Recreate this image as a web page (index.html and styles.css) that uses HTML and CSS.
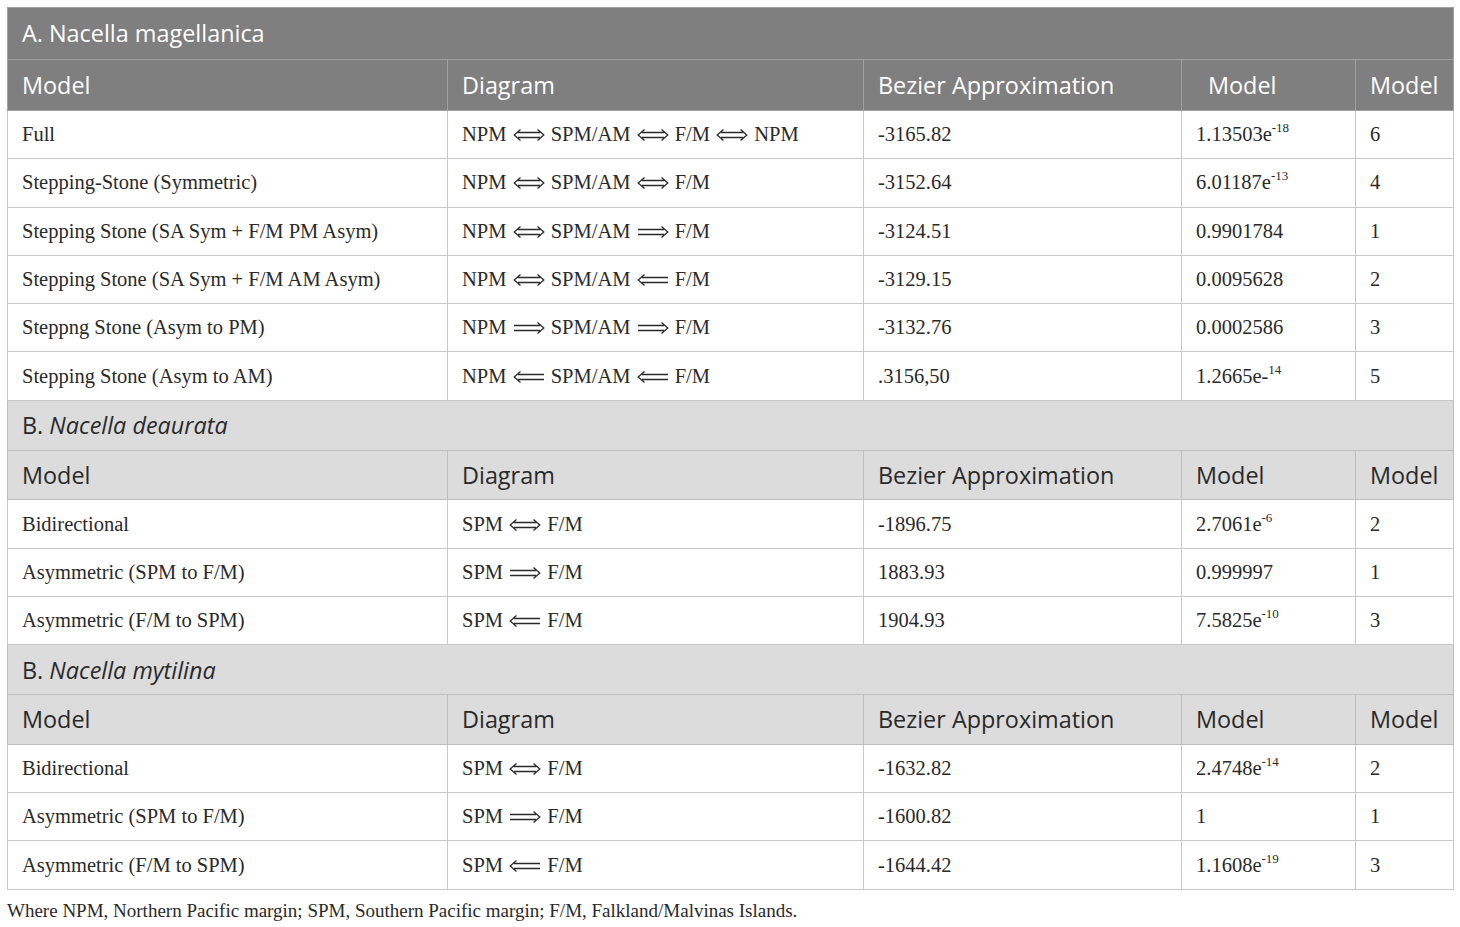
FILE: index.html
```html
<!DOCTYPE html>
<html>
<head>
<meta charset="utf-8">
<link rel="stylesheet" href="styles.css">
</head>
<body>
<svg width="0" height="0" class="defs" aria-hidden="true">
<defs>
<g id="lr"><path d="M5 3.5H27M5 8.5H27M7.5 0.5L1.2 6L7.5 11.5M24.5 0.5L30.8 6L24.5 11.5" fill="none" stroke="#2a2a2a" stroke-width="1.3"/></g>
<g id="r"><path d="M1 3.5H27M1 8.5H27M24.5 0.5L30.8 6L24.5 11.5" fill="none" stroke="#2a2a2a" stroke-width="1.3"/></g>
<g id="l"><path d="M5 3.5H31M5 8.5H31M7.5 0.5L1.2 6L7.5 11.5" fill="none" stroke="#2a2a2a" stroke-width="1.3"/></g>
</defs>
</svg>
<div class="wrap">
<table class="tbl">
<colgroup>
<col class="c1"><col class="c2"><col class="c3"><col class="c4"><col class="c5">
</colgroup>
<tbody>
<tr class="title dark"><td colspan="5">A. Nacella magellanica</td></tr>
<tr class="head dark"><td>Model</td><td>Diagram</td><td>Bezier Approximation</td><td class="ind">Model</td><td>Model</td></tr>
<tr><td>Full</td><td>NPM <svg class="ar" viewBox="0 0 32 12"><use href="#lr"/></svg> SPM/AM <svg class="ar" viewBox="0 0 32 12"><use href="#lr"/></svg> F/M <svg class="ar" viewBox="0 0 32 12"><use href="#lr"/></svg> NPM</td><td>-3165.82</td><td>1.13503e<sup>-18</sup></td><td>6</td></tr>
<tr><td>Stepping-Stone (Symmetric)</td><td>NPM <svg class="ar" viewBox="0 0 32 12"><use href="#lr"/></svg> SPM/AM <svg class="ar" viewBox="0 0 32 12"><use href="#lr"/></svg> F/M</td><td>-3152.64</td><td>6.01187e<sup>-13</sup></td><td>4</td></tr>
<tr><td>Stepping Stone (SA Sym + F/M PM Asym)</td><td>NPM <svg class="ar" viewBox="0 0 32 12"><use href="#lr"/></svg> SPM/AM <svg class="ar" viewBox="0 0 32 12"><use href="#r"/></svg> F/M</td><td>-3124.51</td><td>0.9901784</td><td>1</td></tr>
<tr><td>Stepping Stone (SA Sym + F/M AM Asym)</td><td>NPM <svg class="ar" viewBox="0 0 32 12"><use href="#lr"/></svg> SPM/AM <svg class="ar" viewBox="0 0 32 12"><use href="#l"/></svg> F/M</td><td>-3129.15</td><td>0.0095628</td><td>2</td></tr>
<tr><td>Steppng Stone (Asym to PM)</td><td>NPM <svg class="ar" viewBox="0 0 32 12"><use href="#r"/></svg> SPM/AM <svg class="ar" viewBox="0 0 32 12"><use href="#r"/></svg> F/M</td><td>-3132.76</td><td>0.0002586</td><td>3</td></tr>
<tr><td>Stepping Stone (Asym to AM)</td><td>NPM <svg class="ar" viewBox="0 0 32 12"><use href="#l"/></svg> SPM/AM <svg class="ar" viewBox="0 0 32 12"><use href="#l"/></svg> F/M</td><td>.3156,50</td><td>1.2665e-<sup>14</sup></td><td>5</td></tr>
<tr class="title light"><td colspan="5">B. <i>Nacella deaurata</i></td></tr>
<tr class="head light"><td>Model</td><td>Diagram</td><td>Bezier Approximation</td><td>Model</td><td>Model</td></tr>
<tr><td>Bidirectional</td><td>SPM <svg class="ar" viewBox="0 0 32 12"><use href="#lr"/></svg> F/M</td><td>-1896.75</td><td>2.7061e<sup>-6</sup></td><td>2</td></tr>
<tr><td>Asymmetric (SPM to F/M)</td><td>SPM <svg class="ar" viewBox="0 0 32 12"><use href="#r"/></svg> F/M</td><td>1883.93</td><td>0.999997</td><td>1</td></tr>
<tr><td>Asymmetric (F/M to SPM)</td><td>SPM <svg class="ar" viewBox="0 0 32 12"><use href="#l"/></svg> F/M</td><td>1904.93</td><td>7.5825e<sup>-10</sup></td><td>3</td></tr>
<tr class="title light"><td colspan="5">B. <i>Nacella mytilina</i></td></tr>
<tr class="head light"><td>Model</td><td>Diagram</td><td>Bezier Approximation</td><td>Model</td><td>Model</td></tr>
<tr><td>Bidirectional</td><td>SPM <svg class="ar" viewBox="0 0 32 12"><use href="#lr"/></svg> F/M</td><td>-1632.82</td><td>2.4748e<sup>-14</sup></td><td>2</td></tr>
<tr><td>Asymmetric (SPM to F/M)</td><td>SPM <svg class="ar" viewBox="0 0 32 12"><use href="#r"/></svg> F/M</td><td>-1600.82</td><td>1</td><td>1</td></tr>
<tr><td>Asymmetric (F/M to SPM)</td><td>SPM <svg class="ar" viewBox="0 0 32 12"><use href="#l"/></svg> F/M</td><td>-1644.42</td><td>1.1608e<sup>-19</sup></td><td>3</td></tr>
</tbody>
</table>
<p class="note">Where NPM, Northern Pacific margin; SPM, Southern Pacific margin; F/M, Falkland/Malvinas Islands.</p>
</div>
</body>
</html>
```
FILE: styles.css
```css
html, body { margin: 0; padding: 0; background: #fff; }
.defs { position: absolute; width: 0; height: 0; overflow: hidden; }
.wrap { padding: 7px 0 0 7px; }
.tbl {
  width: 1446px;
  border-collapse: collapse;
  table-layout: fixed;
  font-family: "Liberation Serif", "Times New Roman", serif;
  font-size: 20.5px;
  color: #2a2a2a;
}
.c1 { width: 440px; }
.c2 { width: 416px; }
.c3 { width: 318px; }
.c4 { width: 174px; }
.c5 { width: 98px; }
.tbl td {
  border: 1px solid #c9c9c9;
  padding: 0 14px;
  height: 47.3px;
  vertical-align: middle;
  white-space: nowrap;
}
.tbl tr.title td, .tbl tr.head td {
  font-family: "Open Sans", "Noto Sans", sans-serif;
  font-size: 23.4px;
}
.tbl tr.dark td {
  height: 50.5px;
  background: #7f7f7f;
  color: #fff;
  border-color: #a0a0a0;
}
.tbl tr.light td {
  height: 48.8px;
  background: #dcdcdc;
  color: #2a2a2a;
  border-color: #bdbdbd;
}
.tbl td.ind { padding-left: 26px; }
.ar { width: 32px; height: 12px; vertical-align: 0px; margin: 0 1px; }
sup { font-size: 13px; vertical-align: 0; position: relative; top: -9px; }
.note {
  margin: 10px 0 0 0;
  font-family: "Liberation Serif", "Times New Roman", serif;
  font-size: 19px;
  color: #2a2a2a;
}
```
